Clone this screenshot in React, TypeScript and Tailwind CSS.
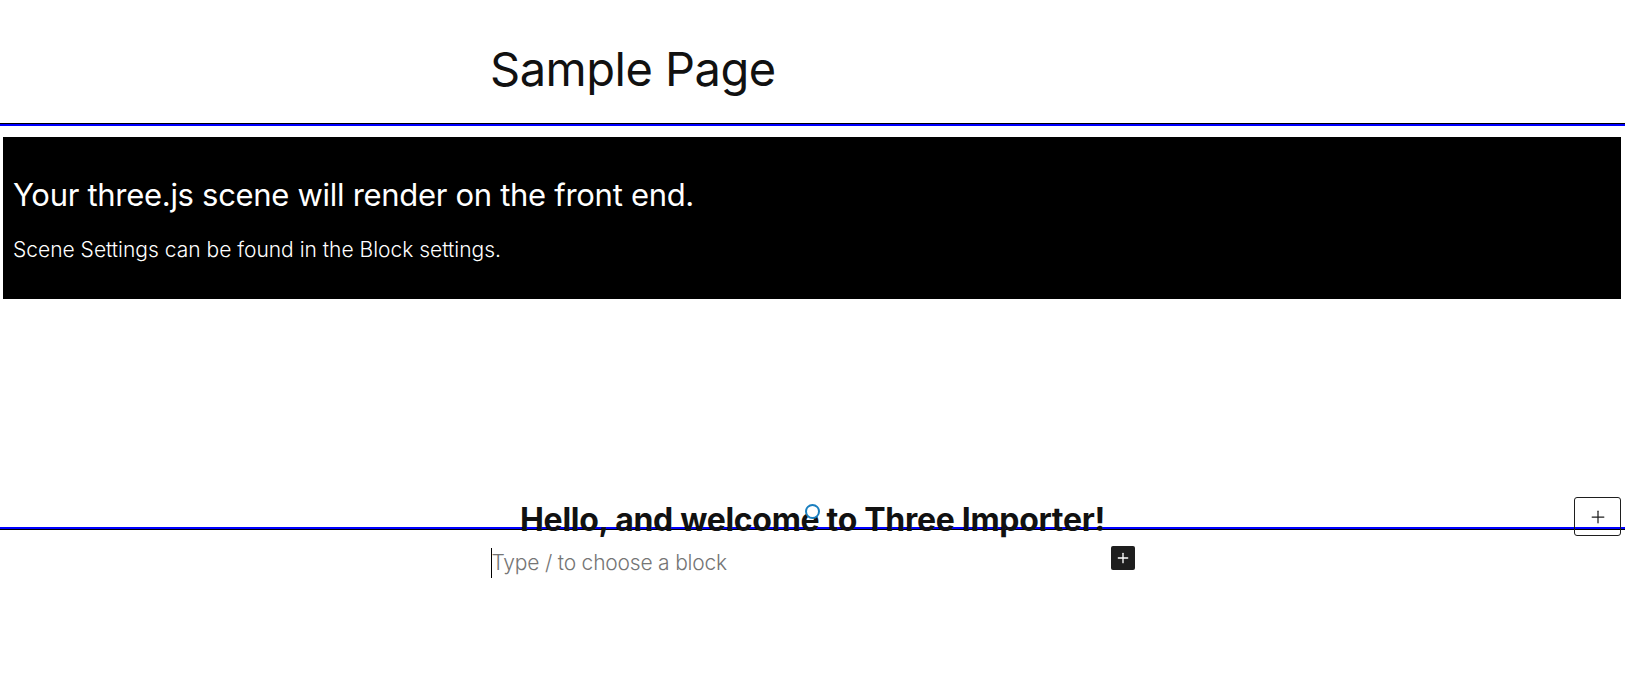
import { Plus } from "lucide-react"

const font = { fontFamily: "Inter, 'Noto Sans', sans-serif" }

export default function App() {
  return (
    <div className="relative w-full h-[681px] bg-white overflow-hidden text-[#111]" style={font}>
      {/* post title */}
      <div className="h-[123px] pl-[490px] pt-[39px]">
        <h1 className="text-[47px] leading-[60px] font-normal tracking-[-0.5px]">Sample Page</h1>
      </div>
      <div className="h-px bg-black" />
      <div className="h-[2px] bg-[#0000ff]" />

      {/* three.js placeholder */}
      <div className="mt-[11px] ml-[3px] mr-[4px] h-[162px] bg-black text-white px-[10px] pt-[40px]">
        <h2 className="text-[31px] leading-[36px] font-normal tracking-[-0.3px]">Your three.js scene will render on the front end.</h2>
        <p className="mt-[23px] text-[21px] leading-[28px] font-light">Scene Settings can be found in the Block settings.</p>
      </div>

      {/* selection line under the heading */}
      <div className="absolute left-0 right-0 top-[527px]">
        <div className="h-[2px] bg-[#0000ff]" />
        <div className="h-px bg-black" />
      </div>

      {/* content */}
      <div className="relative mx-auto w-[644px] pt-[201px]">
        <h2 className="text-center text-[32px] leading-[40px] font-bold tracking-[-0.3px]">
          Hello, and welcome to Three Importer!
        </h2>
        <div className="mt-[2px] flex items-start justify-between h-[40px]">
          <div className="flex items-start pt-[6px]">
            <span className="w-px h-[30px] bg-black" />
            <span className="text-[21px] leading-[30px] font-light text-[#757575] tracking-[-0.2px]">Type / to choose a block</span>
          </div>
          <button className="mt-[4px] w-[24px] h-[24px] rounded-[2px] bg-[#1e1e1e] text-white flex items-center justify-center">
            <Plus size={16} strokeWidth={2} />
          </button>
        </div>
      </div>

      {/* block mover dot */}
      <span className="absolute left-[805px] top-[504px] w-[15px] h-[15px] rounded-full border-2 border-[#1a7fbf] bg-white" />

      {/* side inserter */}
      <button className="absolute left-[1574px] top-[497px] w-[47px] h-[39px] rounded-[3px] border border-[#1e1e1e] flex items-center justify-center text-[#1e1e1e]">
        <Plus size={20} strokeWidth={1.5} />
      </button>
    </div>
  )
}
